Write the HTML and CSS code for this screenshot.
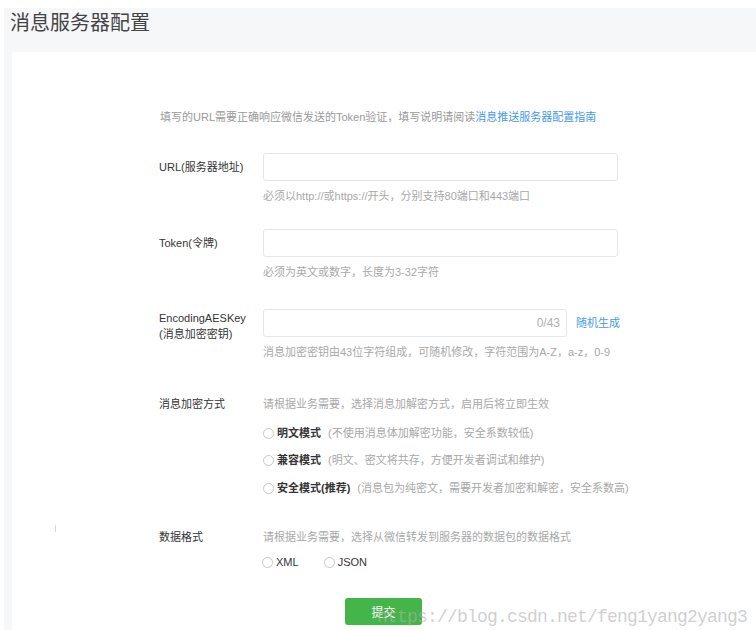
FILE: index.html
```html
<!DOCTYPE html>
<html lang="zh-CN">
<head>
<meta charset="utf-8">
<title>消息服务器配置</title>
<link rel="stylesheet" href="styles.css">
</head>
<body>
<div class="page">
  <h2 class="title">消息服务器配置</h2>
  <div class="card">
    <p class="intro">填写的URL需要正确响应微信发送的Token验证，填写说明请阅读<a class="link" href="#">消息推送服务器配置指南</a></p>

    <div class="row row-url">
      <label class="label label-input">URL(服务器地址)</label>
      <div class="control">
        <div class="input"></div>
        <p class="hint">必须以http://或https://开头，分别支持80端口和443端口</p>
      </div>
    </div>

    <div class="row row-token">
      <label class="label label-input">Token(令牌)</label>
      <div class="control">
        <div class="input"></div>
        <p class="hint">必须为英文或数字，长度为3-32字符</p>
      </div>
    </div>

    <div class="row row-aes">
      <label class="label label-two">EncodingAESKey<br>(消息加密密钥)</label>
      <div class="control">
        <div class="input-line">
          <div class="input input-short"><span class="counter">0/43</span></div>
          <a class="link gen" href="#">随机生成</a>
        </div>
        <p class="hint">消息加密密钥由43位字符组成，可随机修改，字符范围为A-Z，a-z，0-9</p>
      </div>
    </div>

    <div class="row row-mode">
      <label class="label">消息加密方式</label>
      <div class="control">
        <p class="hint hint-top">请根据业务需要，选择消息加解密方式，启用后将立即生效</p>
        <div class="radio radio-first"><span class="circle"></span><b class="opt">明文模式</b><span class="desc">(不使用消息体加解密功能，安全系数较低)</span></div>
        <div class="radio radio-second"><span class="circle"></span><b class="opt">兼容模式</b><span class="desc">(明文、密文将共存，方便开发者调试和维护)</span></div>
        <div class="radio radio-third"><span class="circle"></span><b class="opt">安全模式(推荐)</b><span class="desc">(消息包为纯密文，需要开发者加密和解密，安全系数高)</span></div>
      </div>
    </div>

    <div class="row row-format">
      <label class="label">数据格式</label>
      <div class="control">
        <p class="hint hint-top">请根据业务需要，选择从微信转发到服务器的数据包的数据格式</p>
        <div class="format-line">
          <span class="radio-inline"><span class="circle"></span><span class="fmt">XML</span></span>
          <span class="radio-inline radio-json"><span class="circle"></span><span class="fmt">JSON</span></span>
        </div>
      </div>
    </div>

    <div class="row row-submit">
      <span class="label"></span>
      <div class="control">
        <button class="submit" type="button">提交</button>
      </div>
    </div>
  </div>
  <span class="tick"></span>
  <div class="watermark">https://blog.csdn.net/feng1yang2yang3</div>
</div>
</body>
</html>
```

FILE: styles.css
```css
html, body {
  margin: 0;
  padding: 0;
  background: #ffffff;
}

body {
  font-family: "Liberation Sans", "Noto Sans CJK SC", sans-serif;
  color: #353535;
  overflow: hidden;
  width: 756px;
  height: 630px;
}

.page {
  position: relative;
  margin: 8px 0 0 4px;
  height: 622px;
  background: #f6f7f9;
  overflow: hidden;
  display: flex;
  flex-direction: column;
}

.title {
  margin: 0 0 16px 6px;
  font-size: 20px;
  line-height: 28px;
  font-weight: normal;
  color: #444;
  font-family: "Noto Sans CJK SC", sans-serif;
}

.card {
  flex: 1;
  margin-left: 8px;
  background: #ffffff;
  padding: 57px 0 0 147px;
}

.intro {
  margin: 0;
  font-size: 11px;
  line-height: 16px;
  color: #9a9a9a;
  padding-left: 1px;
}

.link {
  color: #459ae9;
  text-decoration: none;
}

.row {
  display: grid;
  grid-template-columns: 104px 400px;
  align-items: start;
}

.row-url { margin-top: 28px; }
.row-token { margin-top: 25px; }
.row-aes { margin-top: 29px; }
.row-mode { margin-top: 36px; }
.row-format { margin-top: 33px; }
.row-submit { margin-top: 28px; }

.label {
  font-size: 11px;
  line-height: 16px;
  color: #353535;
}

.label-input {
  line-height: 28px;
}

.label-two {
  padding-top: 1px;
}

.control {
  display: flex;
  flex-direction: column;
  align-items: flex-start;
}

.input {
  box-sizing: border-box;
  width: 355px;
  height: 28px;
  border: 1px solid #e4e6ea;
  border-radius: 3px;
  background: #fff;
  display: flex;
  align-items: center;
  justify-content: flex-end;
}

.input-line {
  display: flex;
  align-items: center;
  white-space: nowrap;
}

.input-short {
  width: 304px;
}

.counter {
  font-size: 12px;
  color: #b0b0b0;
  padding-right: 6px;
}

.gen {
  margin-left: 9px;
  font-size: 11px;
  line-height: 16px;
  white-space: nowrap;
}

.hint {
  margin: 7px 0 0;
  font-size: 11px;
  line-height: 16px;
  color: #a8a8a8;
  white-space: nowrap;
}

.hint-top {
  margin-top: 0;
}

.radio {
  display: flex;
  align-items: center;
  font-size: 11px;
  line-height: 16px;
  white-space: nowrap;
}

.radio-first { margin-top: 13px; }
.radio-second { margin-top: 11px; }
.radio-third { margin-top: 12px; }

.circle {
  box-sizing: border-box;
  width: 11px;
  height: 11px;
  border: 1px solid #c8c8c8;
  border-radius: 50%;
  background: #fff;
  margin-right: 3px;
  flex: none;
}

.opt {
  color: #353535;
  font-weight: bold;
}

.desc {
  color: #a8a8a8;
  margin-left: 7px;
}

.format-line {
  margin-top: 9px;
  display: flex;
  align-items: center;
  font-size: 11px;
  line-height: 16px;
  margin-left: -1px;
}

.radio-inline {
  display: inline-flex;
  align-items: center;
}

.radio-json {
  margin-left: 25px;
}

.fmt {
  color: #353535;
}

.submit {
  margin-left: 82px;
  width: 77px;
  height: 27px;
  border: 0;
  border-radius: 3px;
  background: #44b549;
  color: #fff;
  font-family: "Noto Sans CJK SC", sans-serif;
  font-size: 12px;
  padding: 0;
}

.tick {
  position: absolute;
  left: 51px;
  top: 517px;
  width: 1px;
  height: 7px;
  background: #d8d8d8;
}

.watermark {
  position: absolute;
  left: 373px;
  top: 599px;
  font-family: "Liberation Mono", monospace;
  font-size: 18px;
  line-height: 20px;
  letter-spacing: -0.8px;
  color: rgba(175, 175, 175, 0.6);
  white-space: nowrap;
  pointer-events: none;
}
```
